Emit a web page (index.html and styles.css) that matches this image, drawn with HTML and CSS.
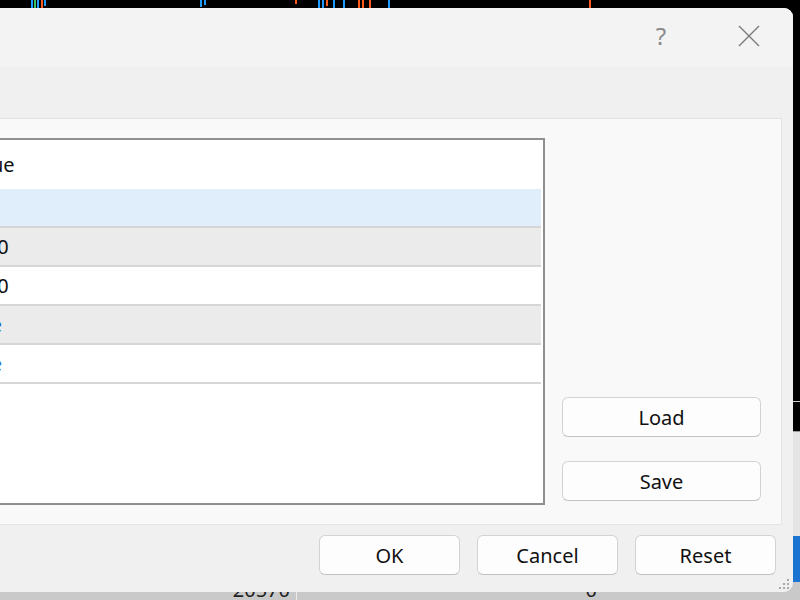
FILE: index.html
```html
<!DOCTYPE html>
<html lang="en">
<head>
    <meta charset="UTF-8">
    <meta name="viewport" content="width=device-width, initial-scale=1.0">
    <title>Expert Properties</title>
    <link rel="stylesheet" href="styles.css">
</head>
<body>

    <!-- Terminal behind the dialog -->
    <div class="terminal">
        <div class="chart">
            <div class="bar blue" style="left:31px"></div>
            <div class="bar green" style="left:34px"></div>
            <div class="bar blue" style="left:37px"></div>
            <div class="bar orange" style="left:41px"></div>
            <div class="bar blue" style="left:44px;height:6px"></div>
            <div class="bar blue" style="left:200px;height:7px"></div>
            <div class="bar blue" style="left:204px;height:5px"></div>
            <div class="bar orange" style="left:295px;height:4px"></div>
            <div class="bar blue" style="left:318px"></div>
            <div class="bar blue" style="left:322px"></div>
            <div class="bar orange" style="left:326px;height:6px"></div>
            <div class="bar blue" style="left:333px"></div>
            <div class="bar blue" style="left:343px"></div>
            <div class="bar orange" style="left:358px"></div>
            <div class="bar orange" style="left:362px"></div>
            <div class="bar orange" style="left:369px"></div>
            <div class="bar blue" style="left:388px"></div>
            <div class="bar orange" style="left:589px"></div>
            <div class="level"></div>
        </div>
        <div class="toolbox">
            <div class="toolbox-rows"></div>
            <div class="toolbox-selected"></div>
            <div class="toolbox-row">
                <span class="cell cell-volume">20570</span>
                <span class="cell cell-profit">0</span>
            </div>
        </div>
    </div>

    <!-- Properties dialog -->
    <div class="dialog">
        <div class="titlebar">
            <div class="title-btn help">?</div>
            <div class="title-btn close">
                <svg width="22" height="22" viewBox="0 0 22 22">
                    <path d="M1 1 L21 21 M21 1 L1 21" stroke="#7a7a7a" stroke-width="1.4" fill="none"/>
                </svg>
            </div>
        </div>

        <div class="tabstrip"></div>

        <div class="panel">
            <div class="list">
                <div class="row header">
                    <span class="col-name">Variable</span>
                    <span class="col-value">Value</span>
                </div>
                <div class="row selected">
                    <span class="col-name">Main settings</span>
                    <span class="col-value"></span>
                </div>
                <div class="row odd">
                    <span class="col-name">Start balance</span>
                    <span class="col-value">1000</span>
                </div>
                <div class="row">
                    <span class="col-name">Max spread</span>
                    <span class="col-value">5000</span>
                </div>
                <div class="row odd">
                    <span class="col-name">Use trailing stop</span>
                    <span class="col-value bool">true</span>
                </div>
                <div class="row">
                    <span class="col-name">Show info panel</span>
                    <span class="col-value bool">true</span>
                </div>
            </div>

            <div class="side">
                <button class="btn">Load</button>
                <button class="btn">Save</button>
            </div>
        </div>

        <div class="footer">
            <button class="btn btn-small">OK</button>
            <button class="btn btn-small">Cancel</button>
            <button class="btn btn-small">Reset</button>
        </div>

        <svg class="grip" width="14" height="14" viewBox="0 0 14 14">
            <rect x="10" y="2" width="2" height="2" fill="#a8a8a8"/>
            <rect x="6" y="6" width="2" height="2" fill="#a8a8a8"/>
            <rect x="10" y="6" width="2" height="2" fill="#a8a8a8"/>
            <rect x="2" y="10" width="2" height="2" fill="#a8a8a8"/>
            <rect x="6" y="10" width="2" height="2" fill="#a8a8a8"/>
            <rect x="10" y="10" width="2" height="2" fill="#a8a8a8"/>
        </svg>
    </div>

</body>
</html>
```

FILE: styles.css
```css
body {
    margin: 0;
    width: 800px;
    height: 600px;
    overflow: hidden;
    position: relative;
    background: #000;
    font-family: "Noto Sans", "Open Sans", sans-serif;
    font-size: 20px;
    color: #111;
}

/* Terminal */
.terminal {
    display: flex;
    flex-direction: column;
    height: 600px;
}
.chart {
    position: relative;
    height: 440px;
    background: #000;
}
.bar {
    position: absolute;
    top: 0;
    width: 2px;
    height: 8px;
}
.blue { background: #1e9bff; }
.green { background: #3cc060; }
.orange { background: #ff5a1a; }
.level {
    position: absolute;
    left: 0;
    right: 0;
    top: 401px;
    height: 1px;
    background: #d0d0d0;
}
.toolbox {
    display: flex;
    flex-direction: column;
    flex: 1;
    background: #e4e4e4;
    border-top: 1px solid #9c9c9c;
}
.toolbox-rows {
    height: 104px;
}
.toolbox-selected {
    height: 46px;
    background: #1b74d2;
}
.toolbox-row {
    display: flex;
    flex: 1;
    background: #c9c9c9;
    line-height: 20px;
    color: #222;
}
.cell {
    margin-top: -2px;
    text-align: right;
    box-sizing: border-box;
}
.cell-volume {
    width: 297px;
    padding-right: 6px;
    border-right: 1px solid #ececec;
}
.cell-profit {
    width: 303px;
    padding-right: 3px;
}

/* Dialog */
.dialog {
    position: absolute;
    top: 8px;
    left: -420px;
    width: 1213px;
    height: 584px;
    display: flex;
    flex-direction: column;
    background: #f0f0f0;
    border-radius: 0 9px 9px 0;
    overflow: hidden;
}
.titlebar {
    display: flex;
    justify-content: flex-end;
    height: 59px;
    background: #f3f3f3;
}
.title-btn {
    width: 88px;
    display: flex;
    align-items: center;
    justify-content: center;
}
.help {
    font-size: 24px;
    color: #8a8a8a;
    padding-bottom: 4px;
}
.close svg {
    margin-bottom: 4px;
}
.tabstrip {
    height: 51px;
    background: #f0f0f0;
}
.panel {
    display: flex;
    gap: 17px;
    margin-right: 11px;
    padding: 19px 20px 19px 20px;
    background: #f9f9f9;
    border-top: 1px solid #e2e2e2;
    border-right: 1px solid #e4e4e4;
    border-bottom: 1px solid #e4e4e4;
}
.list {
    flex: 1;
    height: 367px;
    box-sizing: border-box;
    padding-right: 2px;
    background: #fff;
    border: 2px solid #8f8f8f;
}
.row {
    display: flex;
    align-items: center;
    height: 37px;
    border-bottom: 2px solid #d6d6d6;
}
.row.header {
    height: 49px;
    border-bottom: none;
}
.row.selected {
    background: #e0eefb;
}
.row.odd {
    background: #ebebeb;
}
.col-name {
    width: 351px;
    padding-left: 10px;
    box-sizing: border-box;
}
.col-value {
    padding-left: 10px;
}
.col-value.bool {
    color: #1a6fd0;
}
.side {
    width: 199px;
    display: flex;
    flex-direction: column;
    justify-content: flex-end;
    gap: 24px;
    padding-bottom: 4px;
}
.btn {
    height: 40px;
    width: 199px;
    font-family: inherit;
    font-size: 20px;
    color: #111;
    background: #fdfdfd;
    border: 1px solid #d3d3d3;
    border-bottom-color: #c2c2c2;
    border-radius: 6px;
    padding: 0;
}
.footer {
    display: flex;
    justify-content: flex-end;
    gap: 17px;
    padding: 10px 17px 0 0;
}
.btn-small {
    width: 141px;
}
.grip {
    position: absolute;
    right: 2px;
    bottom: 1px;
}
```
